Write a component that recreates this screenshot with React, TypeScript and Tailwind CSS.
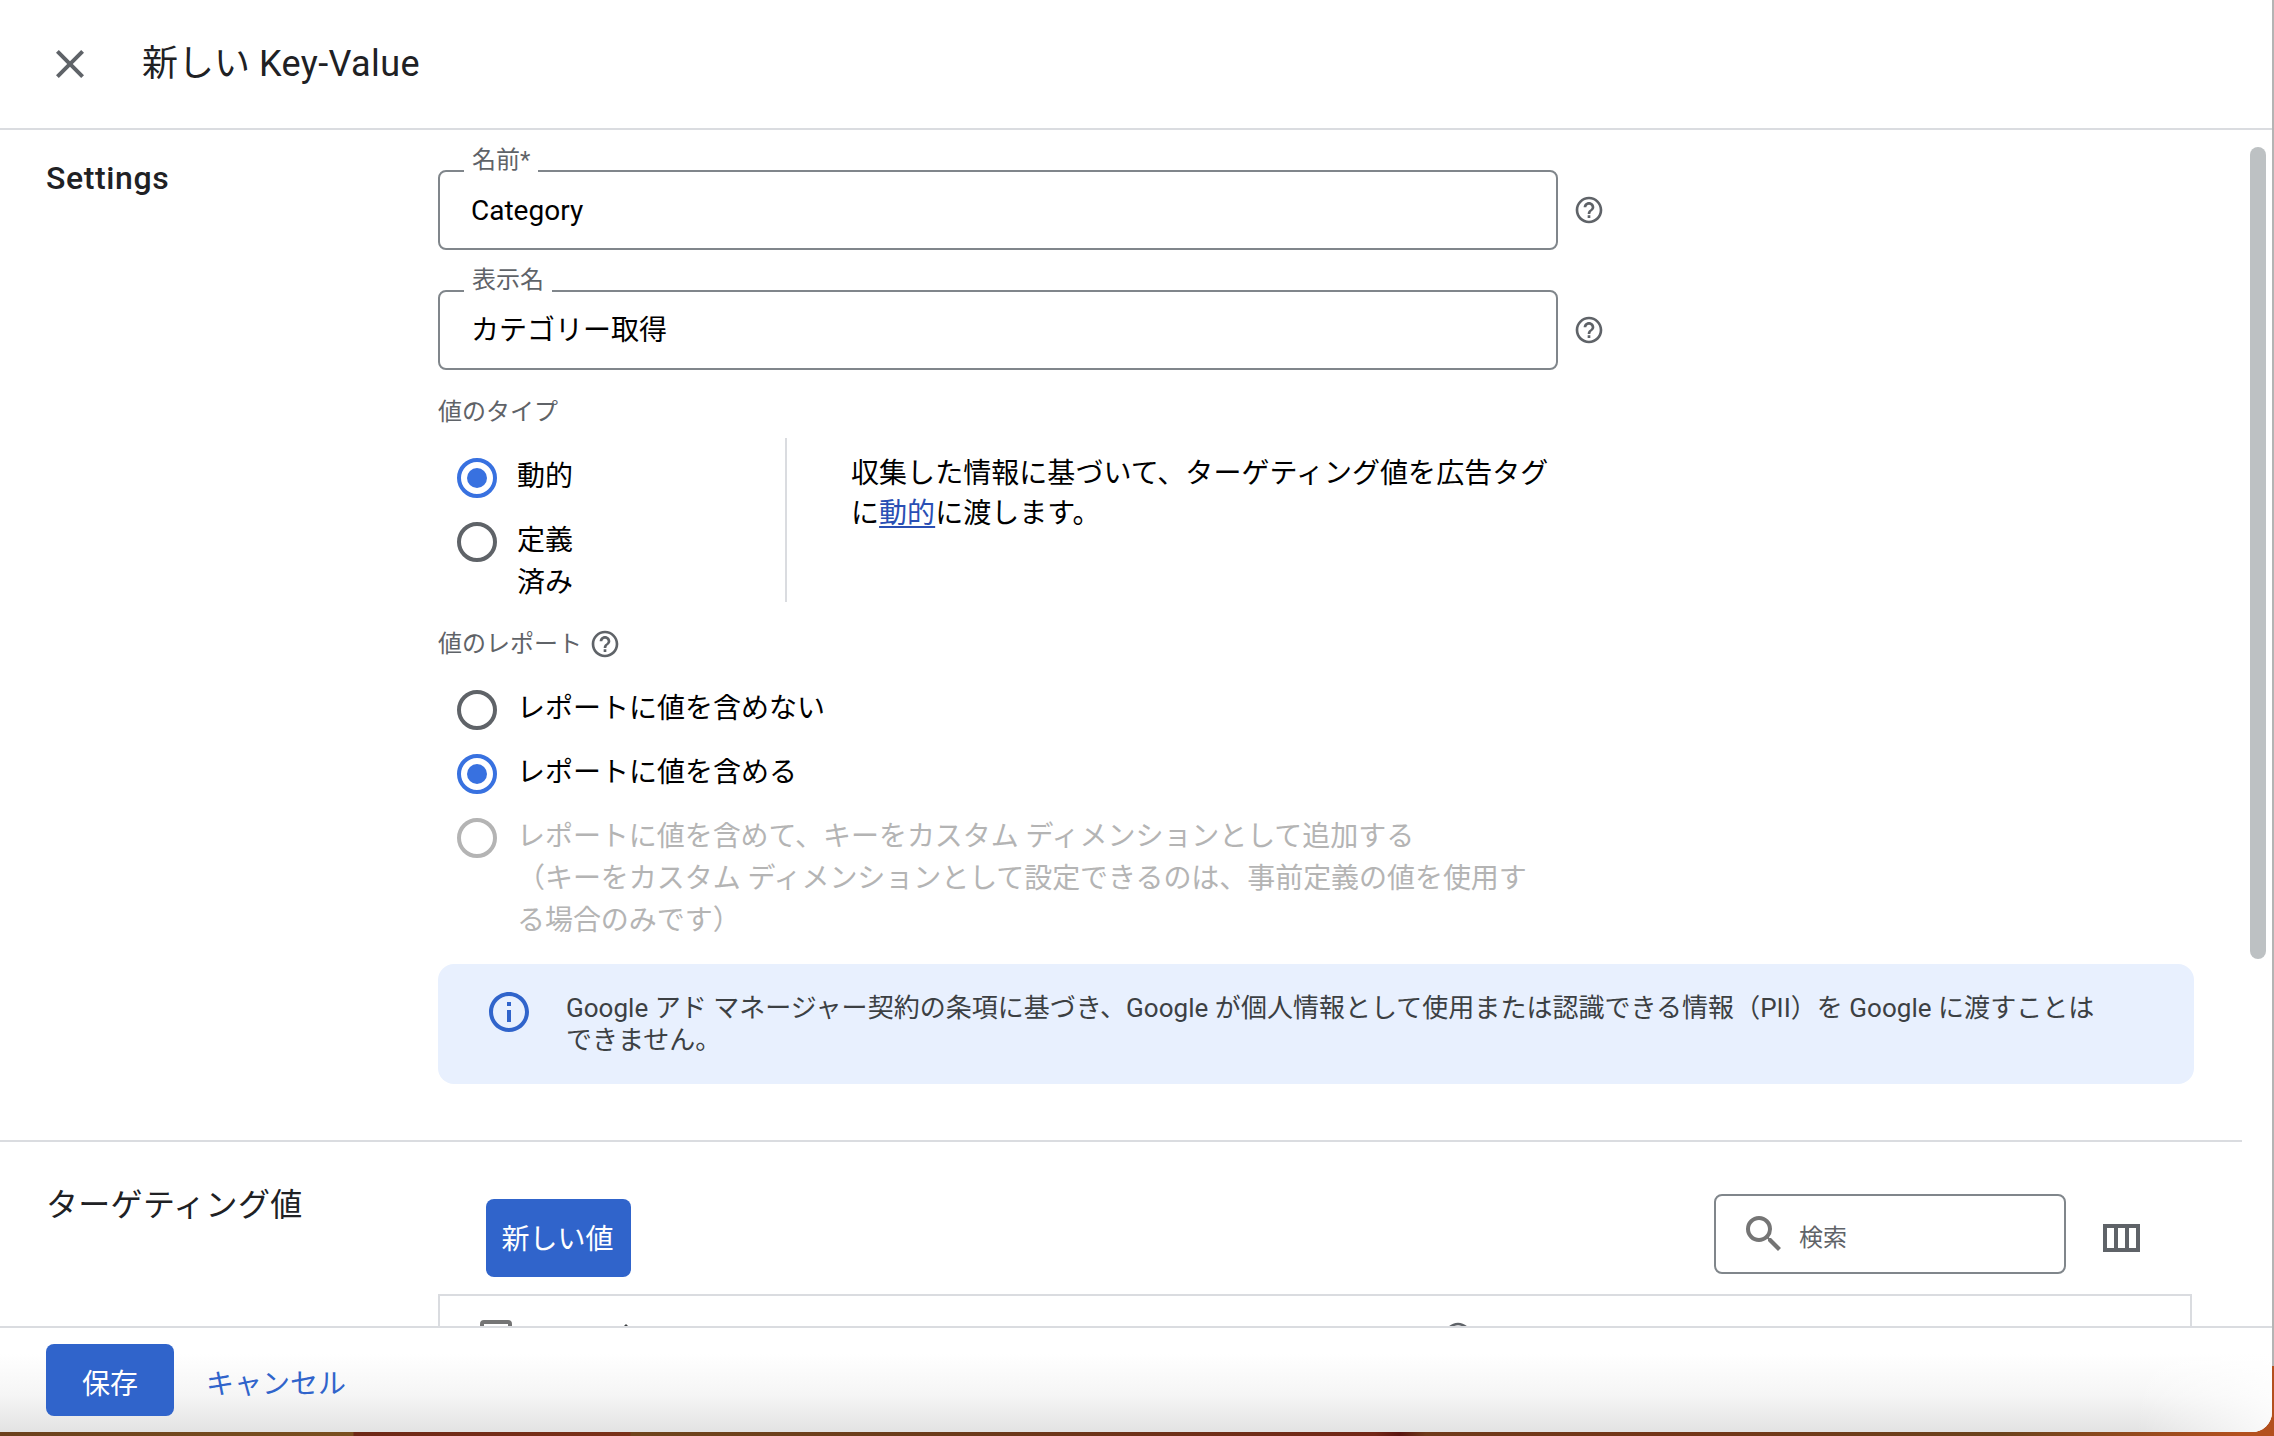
import clsx from "clsx";
import {
	MdArrowUpward,
	MdClose,
	MdHelpOutline,
	MdInfoOutline,
	MdSearch,
} from "react-icons/md";

const reportOptions = [
	{ label: "レポートに値を含めない" },
	{ label: "レポートに値を含める", checked: true },
	{
		label:
			"レポートに値を含めて、キーをカスタム ディメンションとして追加する\n（キーをカスタム ディメンションとして設定できるのは、事前定義の値を使用する場合のみです）",
		disabled: true,
	},
];

export default function App() {
	return (
		<div className="relative w-[2274px] h-[1436px] overflow-hidden bg-[linear-gradient(90deg,#6b401c_0,#7a4f1f_353px,#6e2716_354px,#7a3018_630px,#6f441c_631px,#6b3a1a_950px,#722616_1375px,#5a1410_1400px,#6f3a1a_1426px,#733417_1660px,#6b421c_2000px,#b3501e_2240px)] font-['Roboto','Noto_Sans_CJK_JP',sans-serif] text-black">
			<div className="absolute right-0 top-0 w-[2px] h-[1366px] bg-[#b4b4b4]" />
			<div className="w-[2272px] h-[1432px] flex flex-col bg-white rounded-br-[20px] overflow-hidden">
				<header className="h-[130px] shrink-0 flex items-center border-b-2 border-[#dadce0] pl-[46px]">
					<MdClose className="size-12 text-[#5f6368]" />
					<h1 className="ml-12 text-[36px] leading-none text-[#202124]">
						新しい{" "}
						<span className="tracking-[0.4px]">Key-Value</span>
					</h1>
				</header>
				<main className="flex-1 min-h-0 overflow-hidden flex justify-between">
					<div className="w-[2242px]">
						<Settings />
						<TargetingValues />
					</div>
					<div className="mt-[17px] mr-[6px] w-4 h-[812px] rounded-full bg-[#bdc1c3]" />
				</main>
				<footer className="h-[106px] shrink-0 flex items-start border-t-2 border-[#dadce0] pt-4 pl-[46px] bg-[linear-gradient(90deg,transparent_94%,#ffffffcc_100%),linear-gradient(180deg,#fff_25%,#f5f5f5_65%,#e3e3e3_100%)]">
					<button className="w-[128px] h-[72px] pt-2.5 rounded-lg bg-[#3064cb] text-white text-[28px]">
						保存
					</button>
					<button className="ml-8 h-[72px] pt-2.5 text-[28px] text-[#3064cb]">
						キャンセル
					</button>
				</footer>
			</div>
		</div>
	);
}

function Settings() {
	return (
		<section className="h-[1012px] flex border-b-2 border-[#dadce0]">
			<h2 className="w-[438px] pl-[46px] pt-[30px] text-[32px] leading-[36px] font-medium tracking-[0.6px] text-[#202124]">
				Settings
			</h2>
			<div className="w-[1756px] pt-10">
				<Field label="名前*" value="Category" />
				<div className="h-10" />
				<Field label="表示名" value="カテゴリー取得" />
				<p className="mt-[25px] text-2xl leading-[34px] text-[#5f6368]">
					値のタイプ
				</p>
				<div className="mt-[9px] flex">
					<div className="w-[349px] h-[164px] pl-[19px] pt-[17px] border-r-2 border-[#dadce0]">
						<Radio label="動的" checked />
						<Radio label="定義済み" narrow />
					</div>
					<p className="ml-16 w-[710px] pt-4 text-[28px] leading-[40px] tracking-[0.05px]">
						収集した情報に基づいて、ターゲティング値を広告タグに
						<a
							href="#"
							className="text-[#2a4fb4] underline decoration-2 underline-offset-3"
						>
							動的
						</a>
						に渡します。
					</p>
				</div>
				<div className="mt-[25px] flex items-center h-[34px] text-2xl text-[#5f6368]">
					値のレポート
					<MdHelpOutline className="ml-[7px] size-8" />
				</div>
				<div className="mt-[26px] w-[1100px] pl-[19px]">
					{reportOptions.map((o) => (
						<Radio key={o.label} {...o} />
					))}
				</div>
				<div className="mt-[23px] h-[120px] rounded-2xl bg-[#e8f0fe] flex pl-[47px] pt-6">
					<MdInfoOutline className="size-12 text-[#3064cb]" />
					<p className="ml-[33px] mt-1 w-[1550px] text-[26px] leading-[32px] tracking-[0.03px] text-[#3c4043]">
						Google アド マネージャー契約の条項に基づき、Google
						が個人情報として使用または認識できる情報（PII）を Google
						に渡すことはできません。
					</p>
				</div>
			</div>
		</section>
	);
}

function TargetingValues() {
	return (
		<section className="flex">
			<h2 className="w-[438px] pl-[46px] pt-[43px] text-[32px] leading-[40px] tracking-[0.3px] text-[#202124]">
				ターゲティング値
			</h2>
			<div className="w-[1754px] pt-[52px]">
				<div className="flex items-center h-20 pl-12">
					<button className="mt-2 w-[145px] h-[78px] pt-[3px] pr-0.5 rounded-lg bg-[#3064cb] text-white text-[28px]">
						新しい値
					</button>
					<div className="ml-auto w-[352px] h-20 flex rounded-lg border-2 border-[#80868b] pl-6 pt-[14px]">
						<MdSearch className="size-12 text-[#757575]" />
						<span className="ml-[11px] mt-[11px] text-2xl leading-[34px] text-[#5f6368]">
							検索
						</span>
					</div>
					<svg
						viewBox="0 0 37 28"
						className="ml-[37px] mr-[52px] w-[37px] h-[28px] mt-2"
						fill="none"
						stroke="#5f6368"
						strokeWidth="4"
					>
						<path d="M2 2h33v24H2zM13 2v24M24 2v24" />
					</svg>
				</div>
				<div className="mt-5 h-[84px] flex items-center border-2 border-[#dadce0] pl-10 text-2xl text-[#3c4043]">
					<div className="size-8 border-4 border-[#757575] rounded" />
					<div className="ml-[42px] w-[766px] flex items-center">
						<span className="pt-1.5">名前</span>
						<MdArrowUpward className="ml-1.5 size-9" />
					</div>
					<span className="pt-1">ステータス</span>
					<MdHelpOutline className="ml-[2px] size-8 text-[#5f6368]" />
				</div>
			</div>
		</section>
	);
}

function Field({ label, value }: { label: string; value: string }) {
	return (
		<div className="flex items-center">
			<div className="relative w-[1120px] h-20 flex items-center rounded-lg border-2 border-[#80868b] pl-[31px] pt-0.5 text-[28px]">
				<span className="absolute left-6 -top-[29px] px-2 bg-white text-2xl leading-[34px] text-[#5f6368]">
					{label}
				</span>
				{value}
			</div>
			<MdHelpOutline className="ml-[15px] size-8 text-[#5f6368]" />
		</div>
	);
}

function Radio({
	label,
	checked,
	disabled,
	narrow,
}: {
	label: string;
	checked?: boolean;
	disabled?: boolean;
	narrow?: boolean;
}) {
	return (
		<label
			className={clsx(
				"flex items-start min-h-16 text-[28px] leading-[42px]",
				disabled && "text-[#b4b4b4]"
			)}
		>
			<span
				className={clsx(
					"mt-[3px] size-10 shrink-0 rounded-full border-4 flex items-center justify-center",
					checked
						? "border-[#3871e0]"
						: disabled
						? "border-[#b4b4b4]"
						: "border-[#5f6368]"
				)}
			>
				{checked && <span className="size-5 rounded-full bg-[#3871e0]" />}
			</span>
			<span
				className={clsx(
					"ml-5 pt-px -mb-px whitespace-pre-line",
					narrow ? "w-[60px]" : "w-[1012px]",
					disabled && "tracking-[-0.05px]"
				)}
			>
				{label}
			</span>
		</label>
	);
}
